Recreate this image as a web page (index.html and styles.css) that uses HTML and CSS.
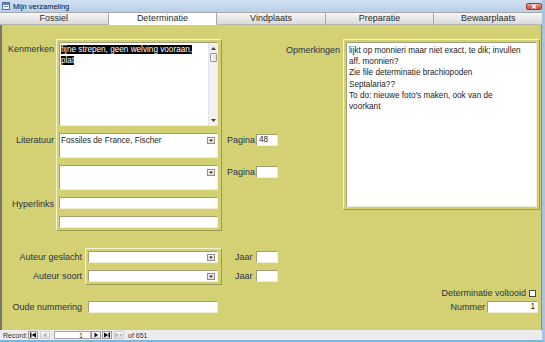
FILE: index.html
```html
<!DOCTYPE html>
<html lang="nl">
<head>
    <meta charset="UTF-8">
    <meta name="viewport" content="width=device-width, initial-scale=1.0">
    <title>Mijn verzameling</title>
    <link rel="stylesheet" href="styles.css">
</head>
<body>

<div class="window">
    <div class="titlebar">
        <svg class="app-icon" width="8" height="8" viewBox="0 0 8 8">
            <rect x="0.5" y="0.5" width="7" height="7" fill="#eef3f9" stroke="#4f6f99"/>
            <rect x="1" y="1" width="6" height="2" fill="#5b86c2"/>
            <rect x="2" y="4" width="4" height="1" fill="#7b8fa8"/>
        </svg>
        <span class="title">Mijn verzameling</span>
        <span class="close">
            <svg width="6" height="5" viewBox="0 0 6 5">
                <path d="M1 0.5 L5 4.5 M5 0.5 L1 4.5" stroke="#fff" stroke-width="1.2"/>
            </svg>
        </span>
    </div>

    <div class="tabs">
        <div class="tab">Fossiel</div>
        <div class="tab active">Determinatie</div>
        <div class="tab">Vindplaats</div>
        <div class="tab">Preparatie</div>
        <div class="tab">Bewaarplaats</div>
    </div>

    <div class="form">
        <div class="col-left">

            <!-- Kenmerken / literatuur / hyperlinks -->
            <div class="group group-main">
                <div class="frame"></div>

                <div class="lbl lbl-top row-2">Kenmerken</div>
                <div class="field memo row-2">
                    <div class="memo-text"><span class="sel">fijne strepen, geen welving vooraan, plat</span></div>
                    <div class="scrollbar">
                        <div class="sb-btn">
                            <svg width="5" height="3" viewBox="0 0 5 3"><polygon points="0,3 5,3 2.5,0" fill="#444"/></svg>
                        </div>
                        <div class="sb-thumb"></div>
                        <div class="sb-track"></div>
                        <div class="sb-btn">
                            <svg width="5" height="3" viewBox="0 0 5 3"><polygon points="0,0 5,0 2.5,3" fill="#444"/></svg>
                        </div>
                    </div>
                </div>

                <div class="lbl lbl-top row-4">Literatuur</div>
                <div class="field combo combo-tall row-4">
                    <span class="value">Fossiles de France, Fischer</span>
                    <span class="dd"><svg width="6" height="5" viewBox="0 0 6 5"><polygon points="1,1.5 5,1.5 3,3.8" fill="#222"/></svg></span>
                </div>
                <div class="side side-pagina row-4">
                    <span class="lbl">Pagina</span>
                    <span class="input small">48</span>
                </div>

                <div class="field combo combo-tall row-6">
                    <span class="value"></span>
                    <span class="dd"><svg width="6" height="5" viewBox="0 0 6 5"><polygon points="1,1.5 5,1.5 3,3.8" fill="#222"/></svg></span>
                </div>
                <div class="side side-pagina row-6">
                    <span class="lbl">Pagina</span>
                    <span class="input small"></span>
                </div>

                <div class="lbl lbl-top row-8">Hyperlinks</div>
                <div class="field input row-8"></div>
                <div class="field input row-10"></div>
            </div>

            <!-- Auteurs -->
            <div class="group group-author">
                <div class="frame"></div>

                <div class="lbl lbl-mid row-2">Auteur geslacht</div>
                <div class="field combo row-2">
                    <span class="value"></span>
                    <span class="dd"><svg width="6" height="5" viewBox="0 0 6 5"><polygon points="1,1.5 5,1.5 3,3.8" fill="#222"/></svg></span>
                </div>
                <div class="side side-jaar row-2">
                    <span class="lbl">Jaar</span>
                    <span class="input small"></span>
                </div>

                <div class="lbl lbl-mid row-4">Auteur soort</div>
                <div class="field combo row-4">
                    <span class="value"></span>
                    <span class="dd"><svg width="6" height="5" viewBox="0 0 6 5"><polygon points="1,1.5 5,1.5 3,3.8" fill="#222"/></svg></span>
                </div>
                <div class="side side-jaar row-4">
                    <span class="lbl">Jaar</span>
                    <span class="input small"></span>
                </div>
            </div>

            <div class="group group-oude">
                <div class="lbl lbl-mid">Oude nummering</div>
                <div class="field input"></div>
            </div>
        </div>

        <div class="col-right">
            <div class="opm-row">
                <div class="lbl opm-lbl">Opmerkingen</div>
                <div class="opm-frame">
                    <div class="field memo opm-memo">
                        <div class="memo-text">
                            lijkt op monnieri maar niet exact, te dik; invullen<br>
                            aff. monnieri?<br>
                            Zie file determinatie brachiopoden<br>
                            Septalaria??<br>
                            To do: nieuwe foto's maken, ook van de<br>
                            voorkant
                        </div>
                    </div>
                </div>
            </div>

            <div class="bottom-right">
                <div class="check-row">
                    <span class="lbl">Determinatie voltooid</span>
                    <span class="checkbox"></span>
                </div>
                <div class="nummer-row">
                    <span class="lbl">Nummer</span>
                    <span class="input nummer">1</span>
                </div>
            </div>
        </div>
    </div>

    <div class="recordbar">
        <span class="rec-label">Record:</span>
        <span class="nav first"><svg width="8" height="6" viewBox="0 0 8 6"><rect x="1" y="0.5" width="1.4" height="5" fill="#111"/><polygon points="7,0.5 2.6,3 7,5.5" fill="#111"/></svg></span>
        <span class="nav prev off"><svg width="8" height="6" viewBox="0 0 8 6"><polygon points="5.5,0.5 2,3 5.5,5.5" fill="#b4b4b4"/></svg></span>
        <span class="rec-input">1</span>
        <span class="nav next"><svg width="8" height="6" viewBox="0 0 8 6"><polygon points="2.5,0.5 6,3 2.5,5.5" fill="#111"/></svg></span>
        <span class="nav last"><svg width="8" height="6" viewBox="0 0 8 6"><polygon points="1,0.5 5.4,3 1,5.5" fill="#111"/><rect x="5.6" y="0.5" width="1.4" height="5" fill="#111"/></svg></span>
        <span class="nav new off"><svg width="8" height="6" viewBox="0 0 8 6"><polygon points="0.5,0.5 3.5,3 0.5,5.5" fill="#b4b4b4"/><path d="M5.8 1.5 V4.5 M4.5 3 H7.1 M4.9 2 L6.7 4 M6.7 2 L4.9 4" stroke="#b4b4b4" stroke-width="0.6"/></svg></span>
        <span class="rec-of">of 651</span>
    </div>
</div>

</body>
</html>
```

FILE: styles.css
```css
* {
    box-sizing: border-box;
}

body {
    margin: 0;
    font-family: "Liberation Sans", Arial, sans-serif;
    background-color: #fff;
}

.window {
    width: 545px;
    height: 342px;
    display: flex;
    flex-direction: column;
    overflow: hidden;
    border-right: 3px solid #a9c4de;
    border-bottom: 2px solid #7cb6da;
}

/* titelbalk */
.titlebar {
    height: 12px;
    display: flex;
    align-items: center;
    padding-left: 2px;
    background: linear-gradient(#d0e0f2, #b9cfe8);
    font-size: 7.5px;
    color: #111;
}

.app-icon {
    display: block;
}

.title {
    margin-left: 3px;
}

.close {
    margin-left: auto;
    width: 16px;
    height: 7px;
    display: flex;
    align-items: center;
    justify-content: center;
    border: 1px solid #9a3b30;
    border-radius: 2px;
    background: linear-gradient(#eba594, #c9493a);
}

.close svg {
    display: block;
}

/* tabbladen */
.tabs {
    height: 13px;
    display: flex;
    border-top: 1px solid #a6a6a6;
    background-color: #e2e2e2;
}

.tab {
    flex: 1;
    height: 12px;
    line-height: 11px;
    text-align: center;
    font-size: 9px;
    color: #2a2a2a;
    background: linear-gradient(#f7f7f7, #dadada);
    border-right: 1px solid #a9a9a9;
    border-bottom: 1px solid #b5b5b5;
}

.tab:last-child {
    border-right: none;
}

.tab.active {
    background: #fff;
    border-bottom-color: #fff;
}

/* formulier */
.form {
    height: 305px;
    display: flex;
    padding-bottom: 17px;
    background-color: #d4d174;
    border-left: 2px solid #77776c;
    border-right: 1px solid #8c8c7c;
}

.col-left {
    width: 278px;
}

.col-right {
    flex: 1;
    display: flex;
    flex-direction: column;
}

.lbl {
    font-size: 9px;
    line-height: 11px;
    color: #29314a;
    white-space: nowrap;
}

.group {
    display: grid;
}

.group .lbl-top,
.group .lbl-mid {
    grid-column: 1;
    text-align: right;
}

.lbl-top {
    padding-right: 2px;
    padding-top: 2px;
}

.lbl-mid {
    padding-right: 3px;
    align-self: center;
}

.frame {
    grid-column: 2 / 5;
    grid-row: 1 / -1;
    border: 1px solid;
    border-color: #f4f3d4 #9d9a56 #9d9a56 #f4f3d4;
}

.field {
    grid-column: 3;
    background-color: #fff;
    border: 1px solid;
    border-color: #a29f78 #efeed9 #efeed9 #a29f78;
    font-size: 8.2px;
    line-height: 11.2px;
    color: #1c1c1c;
}

.row-2 { grid-row: 2; }
.row-4 { grid-row: 4; }
.row-6 { grid-row: 6; }
.row-8 { grid-row: 8; }
.row-10 { grid-row: 10; }

.group-main {
    margin-top: 14px;
    grid-template-columns: 54px 3px 159px 4px 1fr;
    grid-template-rows: 3px 84px 7px 25px 7px 25px 7px 12px 7px 12px 3px;
}

.group-author {
    margin-top: 17px;
    grid-template-columns: 83px 3px 130px 4px 1fr;
    grid-template-rows: 3px 12px 7px 12px 3px;
}

.group-oude {
    margin-top: 16px;
    grid-template-columns: 83px 3px 130px;
    grid-template-rows: 12px;
}

/* memo velden */
.memo {
    display: flex;
    overflow: hidden;
}

.memo-text {
    flex: 1;
    padding: 1px 1px 0 1px;
    overflow: hidden;
}

.sel {
    background-color: #000;
    color: #fff;
}

.scrollbar {
    width: 9px;
    margin: 0 0 0 0;
    display: flex;
    flex-direction: column;
    background-color: #f1f1f1;
    border-left: 1px solid #e4e4e4;
}

.sb-btn {
    height: 10px;
    display: flex;
    align-items: center;
    justify-content: center;
}

.sb-btn svg {
    display: block;
}

.sb-thumb {
    height: 9px;
    margin: 0 0.5px;
    background: linear-gradient(90deg, #fafafa, #dedede);
    border: 1px solid #9a9a9a;
    border-radius: 1px;
}

.sb-track {
    flex: 1;
}

/* keuzelijsten */
.combo {
    display: flex;
    justify-content: space-between;
    align-items: center;
    padding: 0 2px 0 1px;
}

.combo-tall {
    align-items: flex-start;
    padding-top: 1px;
}

.combo-tall .dd {
    margin-top: 2px;
}

.dd {
    width: 8px;
    height: 7px;
    display: flex;
    align-items: center;
    justify-content: center;
    background: linear-gradient(#fbfbfb, #dcdcdc);
    border: 1px solid #8e8e8e;
}

.dd svg {
    display: block;
}

.input {
    display: block;
    height: 12px;
    padding: 0 2px;
    background-color: #fff;
    border: 1px solid;
    border-color: #a29f78 #efeed9 #efeed9 #a29f78;
    font-size: 8.2px;
    line-height: 10px;
    color: #1c1c1c;
}

.field.input {
    padding: 0 2px;
}

.side {
    grid-column: 5;
    display: flex;
    align-items: center;
}

.side-pagina {
    align-self: start;
    padding-left: 5px;
    padding-top: 1px;
}

.side-pagina .input {
    margin-left: 1px;
}

.side-jaar {
    padding-left: 13px;
}

.side-jaar .input {
    margin-left: 3px;
}

.input.small {
    width: 22px;
}

/* rechterkolom */
.opm-row {
    display: flex;
    justify-content: flex-end;
    margin-top: 14px;
    margin-right: 1px;
}

.opm-lbl {
    padding-top: 6px;
    padding-right: 3px;
}

.opm-frame {
    width: 197px;
    height: 171px;
    padding: 2px;
    display: flex;
    border: 1px solid;
    border-color: #f4f3d4 #9d9a56 #9d9a56 #f4f3d4;
}

.opm-memo {
    flex: 1;
}

.opm-memo .memo-text {
    padding: 2px 2px 0 2px;
    white-space: nowrap;
}

.bottom-right {
    margin-top: auto;
    display: flex;
    flex-direction: column;
    align-items: flex-end;
    padding-right: 3px;
}

.check-row {
    height: 10px;
    display: flex;
    align-items: center;
}

.checkbox {
    width: 7px;
    height: 7px;
    margin-left: 3px;
    margin-right: 2px;
    background-color: #fff;
    border: 1px solid #4a4a4a;
}

.nummer-row {
    margin-top: 3px;
    display: flex;
    align-items: center;
}

.input.nummer {
    width: 51px;
    margin-left: 2px;
    text-align: right;
}

/* recordnavigatie */
.recordbar {
    height: 10px;
    display: flex;
    align-items: center;
    padding-left: 3px;
    background-color: #ececec;
    font-size: 7px;
    color: #333;
}

.rec-label {
    width: 25px;
}

.nav {
    width: 10px;
    height: 8px;
    display: flex;
    align-items: center;
    justify-content: center;
    background: linear-gradient(#fdfdfd, #dedede);
    border: 1px solid #9c9c9c;
}

.nav svg {
    display: block;
}

.nav.off {
    border-color: #cfcfcf;
}

.nav.prev {
    margin-left: 2px;
}

.nav.last {
    margin-left: 1px;
}

.nav.new {
    margin-left: 2px;
}

.rec-input {
    width: 37px;
    height: 8px;
    margin-left: 4px;
    padding-right: 7px;
    text-align: right;
    line-height: 7px;
    background-color: #fff;
    border: 1px solid #a5a5a5;
}

.rec-of {
    margin-left: 4px;
}
```
